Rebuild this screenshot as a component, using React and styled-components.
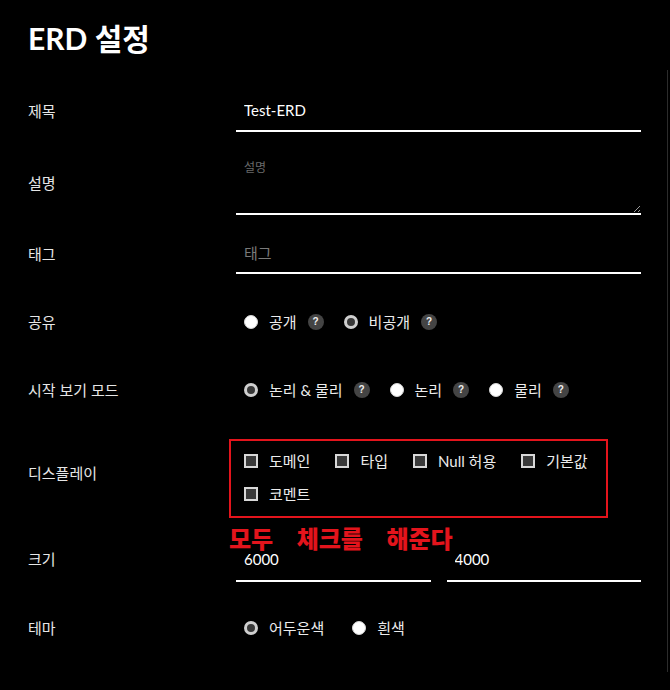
import React from "react";
import styled, { createGlobalStyle } from "styled-components";

const GlobalStyle = createGlobalStyle`
  body {
    margin: 0;
    background: #000;
  }
  * {
    box-sizing: border-box;
  }
`;

const FONT = `"Lato", "Noto Sans CJK KR", sans-serif`;

const Page = styled.div`
  width: 670px;
  min-height: 690px;
  background: #000;
  font-family: ${FONT};
  color: #e8e8e8;
`;

const Title = styled.h1`
  margin: 0;
  padding: 20px 28px 0;
  font-size: 30px;
  line-height: 36px;
  font-weight: 700;
  color: #fff;
`;

const Form = styled.div`
  margin-top: 14px;
  width: 668px;
  padding: 20px 26px 16px 28px;
  border-right: 1px solid #2c2c2c;
  display: flex;
  flex-direction: column;
  gap: 18px;
`;

const Row = styled.div`
  display: flex;
  align-items: center;
  height: ${props => props.$h}px;
`;

const Label = styled.div`
  width: 208px;
  flex-shrink: 0;
  font-size: 15px;
  line-height: 20px;
  color: #e6e6e6;
`;

const Control = styled.div`
  flex: 1;
  display: flex;
  align-self: ${props => props.$align || "center"};
  gap: 16px;
  position: relative;
`;

const TextInput = styled.input`
  width: 100%;
  height: ${props => props.$h || 41}px;
  padding: 0 8px ${props => props.$pb || 0}px;
  background: transparent;
  border: none;
  border-bottom: 2px solid #fff;
  outline: none;
  color: #fff;
  font-family: ${FONT};
  font-size: 15px;
  &::placeholder {
    color: #7a7a7a;
  }
`;

const TextArea = styled.textarea`
  width: 100%;
  height: 65px;
  padding: 10px 8px;
  background: transparent;
  border: none;
  border-bottom: 2px solid #fff;
  outline: none;
  color: #fff;
  font-family: ${FONT};
  font-size: 12px;
  line-height: 16px;
  color-scheme: dark;
  resize: vertical;
  &::placeholder {
    color: #6a6a6a;
  }
`;

const RadioGroup = styled.div`
  display: flex;
  align-items: center;
  gap: ${props => props.$gap || 20}px;
  padding-left: 8px;
`;

const Option = styled.label`
  display: flex;
  align-items: center;
  font-size: 15px;
  line-height: 20px;
  color: #ececec;
  white-space: nowrap;
`;

const RadioDot = styled.span`
  width: 14px;
  height: 14px;
  border-radius: 50%;
  margin-right: 11px;
  flex-shrink: 0;
  background: ${props => (props.$checked ? "#383838" : "#fff")};
  border: ${props => (props.$checked ? "3px solid #cfcfcf" : "1px solid #d6d6d6")};
`;

const Help = styled.span`
  width: 16px;
  height: 16px;
  flex-shrink: 0;
  border-radius: 50%;
  margin-left: 11px;
  background: #444;
  color: #f0f0f0;
  font-size: 10px;
  font-weight: 700;
  line-height: 16px;
  text-align: center;
  font-family: "Liberation Sans", sans-serif;
`;

const CheckGroup = styled.div`
  width: 379px;
  margin-left: -7px;
  padding: 10px 4px 12px 13px;
  border: 2px solid #e3141c;
  display: flex;
  flex-wrap: wrap;
  column-gap: 25px;
  row-gap: 13px;
  position: relative;
`;

const CheckBox = styled.span`
  width: 14px;
  height: 14px;
  margin-right: 11px;
  flex-shrink: 0;
  background: #3a3a3a;
  border: 2px solid #d8d8d8;
`;

const Note = styled.div`
  position: absolute;
  left: -2px;
  top: calc(100% + 7px);
  color: #e3141c;
  font-family: "Noto Sans CJK KR", sans-serif;
  font-size: 24px;
  font-weight: 900;
  line-height: 30px;
  word-spacing: 18px;
  white-space: nowrap;
`;

const Radio = ({ text, checked, help }) => (
  <Option>
    <RadioDot $checked={checked} />
    {text}
    {help && <Help>?</Help>}
  </Option>
);

const Check = ({ text }) => (
  <Option>
    <CheckBox />
    {text}
  </Option>
);

const App = () => {
  return (
    <>
      <GlobalStyle />
      <Page>
        <Title>ERD 설정</Title>
        <Form>
          <Row $h={42}>
            <Label>제목</Label>
            <Control>
              <TextInput $h={42} defaultValue="Test-ERD" />
            </Control>
          </Row>
          <Row $h={65}>
            <Label>설명</Label>
            <Control>
              <TextArea placeholder="설명" />
            </Control>
          </Row>
          <Row $h={41}>
            <Label>태그</Label>
            <Control>
              <TextInput placeholder="태그" />
            </Control>
          </Row>
          <Row $h={60}>
            <Label>공유</Label>
            <Control>
              <RadioGroup>
                <Radio text="공개" help />
                <Radio text="비공개" checked help />
              </RadioGroup>
            </Control>
          </Row>
          <Row $h={40}>
            <Label>시작 보기 모드</Label>
            <Control>
              <RadioGroup>
                <Radio text="논리 & 물리" checked help />
                <Radio text="논리" help />
                <Radio text="물리" help />
              </RadioGroup>
            </Control>
          </Row>
          <Row $h={90}>
            <Label>디스플레이</Label>
            <Control $align="flex-end">
              <CheckGroup>
                <Check text="도메인" />
                <Check text="타입" />
                <Check text="Null 허용" />
                <Check text="기본값" />
                <Check text="코멘트" />
                <Note>모두 체크를 해준다</Note>
              </CheckGroup>
            </Control>
          </Row>
          <Row $h={46}>
            <Label>크기</Label>
            <Control $align="flex-end">
              <TextInput $h={42} $pb={3} defaultValue="6000" />
              <TextInput $h={42} $pb={3} defaultValue="4000" />
            </Control>
          </Row>
          <Row $h={56}>
            <Label>테마</Label>
            <Control>
              <RadioGroup $gap={28}>
                <Radio text="어두운색" checked />
                <Radio text="흰색" />
              </RadioGroup>
            </Control>
          </Row>
        </Form>
      </Page>
    </>
  );
};

export default App;
